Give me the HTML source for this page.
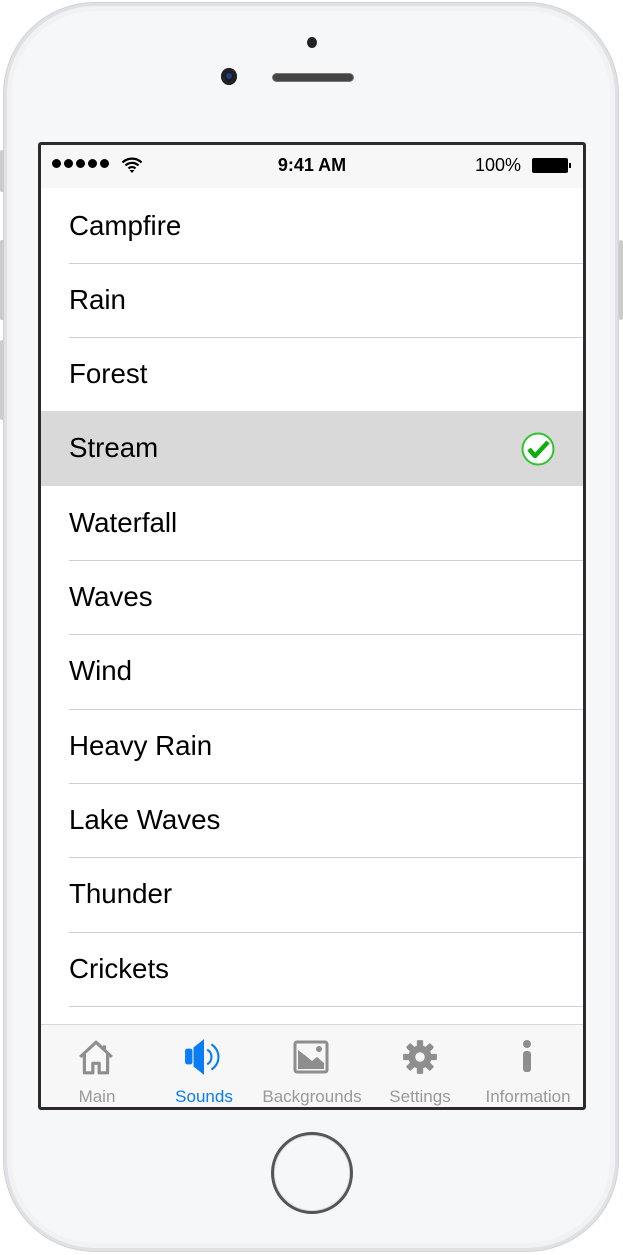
<!DOCTYPE html>
<html><head><meta charset="utf-8">
<style>
html,body{margin:0;padding:0;}
body{width:623px;height:1255px;background:#fff;position:relative;overflow:hidden;font-family:"Liberation Sans",sans-serif;}
.phone{position:absolute;left:3px;top:2px;width:616px;height:1250px;border-radius:92px;background:#f6f7f9;border:1px solid #cfd1d4;box-shadow:inset 0 0 0 3px #dfe1e4,inset 0 0 0 8px #f1f2f4;box-sizing:border-box;}
.btn{position:absolute;width:4px;background:#ccc;border-radius:2px;}
.screen{position:absolute;left:38px;top:142px;width:548px;height:968px;border:3px solid #2b2b2b;border-radius:3px;box-sizing:border-box;background:#fff;overflow:hidden;}
.status{position:absolute;left:0;top:0;width:100%;height:43px;background:#f7f7f7;}
.row{position:absolute;left:0;width:100%;height:74px;}
.row span{position:absolute;left:28px;top:21px;font-size:27.7px;color:#000;}
.sep{position:absolute;left:28px;right:0;height:1px;background:#d0d0d4;}
.tab{position:absolute;left:0;top:879px;width:100%;height:86px;background:#f7f7f7;border-top:1px solid #d8d8d8;}
.tl{position:absolute;top:62px;font-size:17px;color:#999;transform:translateX(-50%);white-space:nowrap;}
.dot{position:absolute;top:14px;width:9px;height:9px;border-radius:50%;background:#000;}
</style></head><body>
<div class="phone"></div>
<div class="btn" style="left:0;top:150px;height:42px"></div>
<div class="btn" style="left:0;top:240px;height:80px"></div>
<div class="btn" style="left:0;top:340px;height:80px"></div>
<div class="btn" style="right:0;top:240px;height:80px"></div>
<div style="position:absolute;left:307px;top:37px;width:10px;height:11px;border-radius:50%;background:#222"></div>
<div style="position:absolute;left:221px;top:68px;width:16px;height:17px;border-radius:50%;background:#1a1a1a;box-shadow:inset 0 0 0 4px #222"><div style="position:absolute;left:5px;top:5px;width:6px;height:6px;border-radius:50%;background:#1d3f8a"></div></div>
<div style="position:absolute;left:272px;top:73px;width:82px;height:9px;border-radius:5px;background:#444;border:1px solid #777;box-sizing:border-box"></div>
<div style="position:absolute;left:271px;top:1132px;width:82px;height:82px;border-radius:50%;box-sizing:border-box;border:3px solid #555;box-shadow:inset 0 0 0 1px #ddd"></div>

<div class="screen">
  <div class="status">
    <div class="dot" style="left:11px"></div><div class="dot" style="left:23px"></div><div class="dot" style="left:35px"></div><div class="dot" style="left:47px"></div><div class="dot" style="left:59px"></div>
    <svg style="position:absolute;left:80px;top:11px" width="22" height="18" viewBox="0 0 22 18"><path d="M1.5 6.5a13.5 13.5 0 0 1 19 0M4.5 9.5a9.3 9.3 0 0 1 13 0M7.5 12.5a5 5 0 0 1 7 0" fill="none" stroke="#000" stroke-width="2.2"/><path d="M8.5 14l2.5 3 2.5-3z" fill="#000"/></svg>
    <div style="position:absolute;left:0;width:100%;top:10px;text-align:center;font-size:18px;font-weight:bold;color:#000">9:41 AM</div>
    <div style="position:absolute;left:434px;top:10px;font-size:18px;color:#000">100%</div>
    <div style="position:absolute;left:491px;top:13px;width:36px;height:15px;background:#000;border-radius:2px"></div>
    <div style="position:absolute;left:528px;top:18px;width:2px;height:5px;background:#000"></div>
  </div>
  <div class="row" style="top:44px"><span>Campfire</span></div><div class="sep" style="top:118px"></div>
  <div class="row" style="top:118px"><span>Rain</span></div><div class="sep" style="top:192px"></div>
  <div class="row" style="top:192px"><span>Forest</span></div>
  <div class="row" style="top:266px;background:#d9d9d9;height:75px"><span>Stream</span>
    <svg style="position:absolute;left:479px;top:20px" width="36" height="36" viewBox="0 0 36 36"><circle cx="18" cy="18" r="15.5" fill="#fff" stroke="#2ec42e" stroke-width="2"/><path d="M9 18l6 7 13-14" fill="none" stroke="#0fae0f" stroke-width="4.5" stroke-linejoin="round"/></svg>
  </div>
  <div class="row" style="top:341px"><span>Waterfall</span></div><div class="sep" style="top:415px"></div>
  <div class="row" style="top:415px"><span>Waves</span></div><div class="sep" style="top:489px"></div>
  <div class="row" style="top:489px"><span>Wind</span></div><div class="sep" style="top:564px"></div>
  <div class="row" style="top:564px"><span>Heavy Rain</span></div><div class="sep" style="top:638px"></div>
  <div class="row" style="top:638px"><span>Lake Waves</span></div><div class="sep" style="top:712px"></div>
  <div class="row" style="top:712px"><span>Thunder</span></div><div class="sep" style="top:787px"></div>
  <div class="row" style="top:787px"><span>Crickets</span></div><div class="sep" style="top:861px"></div>
  <div class="tab">
    <svg style="position:absolute;left:36px;top:13px" width="38" height="38" viewBox="0 0 36 36"><path d="M3 18L18 4l15 14M7 15v18h8v-9h6v9h8V15M26 7v5" fill="none" stroke="#8e8e8e" stroke-width="3" stroke-linejoin="round"/></svg>
    <div class="tl" style="left:56px">Main</div>
    <svg style="position:absolute;left:142px;top:13px" width="42" height="38" viewBox="0 0 40 36"><rect x="2" y="10" width="7" height="15" rx="2" fill="#0a7cf4"/><path d="M10 9l10-8v34l-10-8z" fill="#0a7cf4"/><path d="M23 11a8 8 0 0 1 0 14M27 6a14 14 0 0 1 0 24" fill="none" stroke="#0a7cf4" stroke-width="2"/></svg>
    <div class="tl" style="left:163px;color:#0a7cf4">Sounds</div>
    <svg style="position:absolute;left:252px;top:14px" width="36" height="36" viewBox="0 0 36 34"><rect x="2" y="2" width="32" height="30" rx="2" fill="none" stroke="#8e8e8e" stroke-width="3"/><path d="M5 29V10l8 6 6 5 5-4 7 6v6z" fill="#8e8e8e"/><circle cx="26" cy="9" r="3" fill="#8e8e8e"/></svg>
    <div class="tl" style="left:271px">Backgrounds</div>
    <svg style="position:absolute;left:360px;top:13px" width="38" height="38" viewBox="0 0 36 36"><g fill="#8e8e8e"><circle cx="18" cy="18" r="11"/><g id="t"><rect x="15" y="2" width="6" height="8" rx="1"/></g><use href="#t" transform="rotate(45 18 18)"/><use href="#t" transform="rotate(90 18 18)"/><use href="#t" transform="rotate(135 18 18)"/><use href="#t" transform="rotate(180 18 18)"/><use href="#t" transform="rotate(225 18 18)"/><use href="#t" transform="rotate(270 18 18)"/><use href="#t" transform="rotate(315 18 18)"/></g><circle cx="18" cy="18" r="4.5" fill="#f7f7f7"/></svg>
    <div class="tl" style="left:379px">Settings</div>
    <svg style="position:absolute;left:476px;top:13px" width="20" height="38" viewBox="0 0 20 36"><circle cx="10" cy="5" r="4" fill="#8e8e8e"/><rect x="6" y="12" width="8" height="21" rx="3" fill="#8e8e8e"/></svg>
    <div class="tl" style="left:487px">Information</div>
  </div>
</div>
</body></html>
